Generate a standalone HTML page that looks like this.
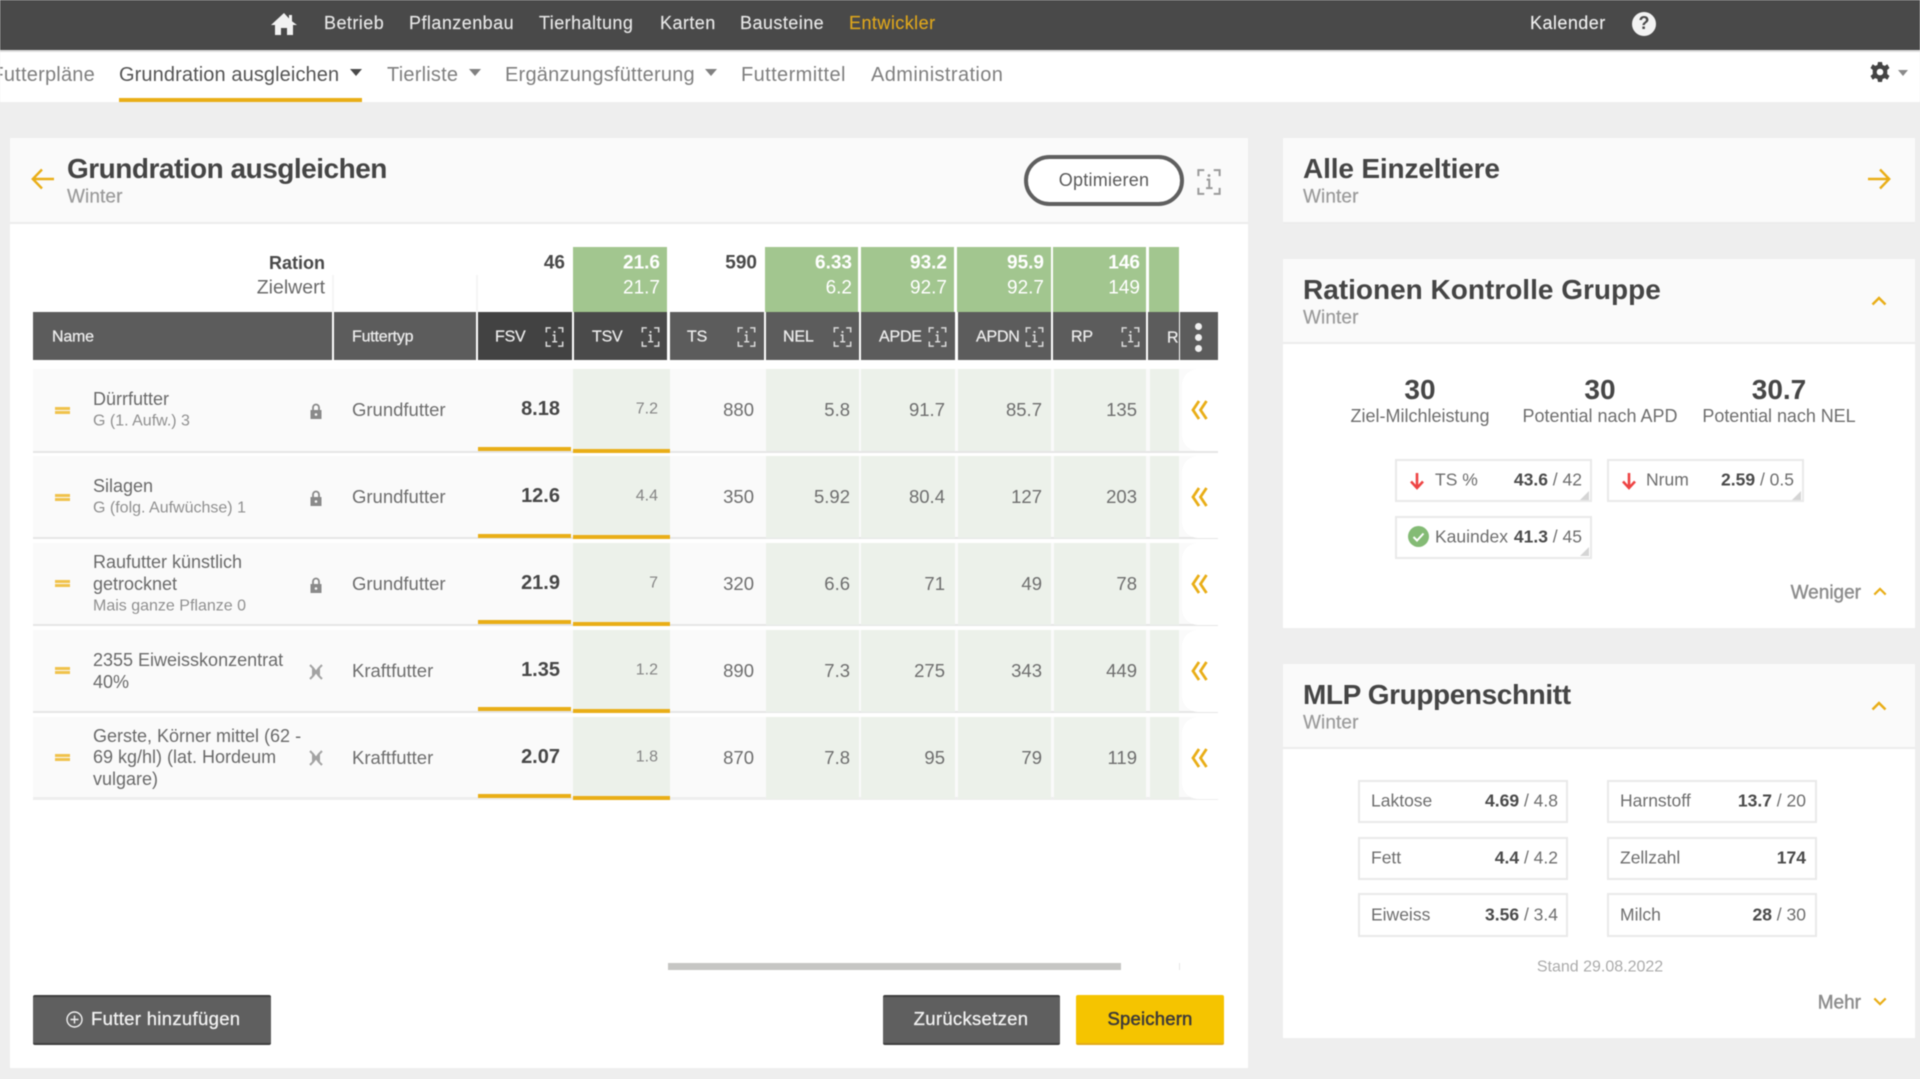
<!DOCTYPE html>
<html lang="de">
<head>
<meta charset="utf-8">
<title>Grundration ausgleichen</title>
<style>
html,body{margin:0;padding:0;width:1920px;height:1079px;overflow:hidden;background:#eeeeee}
#p{position:relative;width:1920px;height:1079px;overflow:hidden;background:#eeeeee;font-family:"Liberation Sans",sans-serif;font-size:18px;color:#6f6f6f;filter:blur(.6px)}
.b{position:absolute}
.t{position:absolute;white-space:nowrap;transform:translateY(-50%);line-height:1.2}
.r{transform:translate(-100%,-50%)}
.c{transform:translate(-50%,-50%)}
.nav{color:#e6e6e6;font-size:18px;letter-spacing:.45px;margin-top:1px;-webkit-text-stroke:.15px #e6e6e6}
.sub{font-size:20px;color:#7f7f7f;letter-spacing:.22px;margin-top:1px}
.h1{font-size:28px;font-weight:bold;color:#454545}
.win{font-size:19px;color:#9a9a9a;margin-top:2px;letter-spacing:.1px;-webkit-text-stroke:.2px #9a9a9a}
.th{color:#ececec;font-size:16px;-webkit-text-stroke:.25px #ececec;margin-top:1px;letter-spacing:-.2px}
.gr{color:#fff;font-size:19px;font-weight:bold;margin-top:1px}
.gl{color:#fff;font-size:19px;margin-top:1px}
.nm{font-size:18px;color:#6a6a6a;margin-top:1px}
.sm{font-size:16px;color:#909090;margin-top:1px}
.fs{font-size:20px;font-weight:bold;color:#474747;margin-top:1px}
.ts{font-size:16px;color:#858585;margin-top:1px}
.v{font-size:18.5px;color:#6e6e6e}
.card{position:absolute;box-sizing:border-box;border:2px solid #e9e9e9;background:#fff}
.lb{font-size:17.5px;color:#6e6e6e}
.val{font-size:17.5px;color:#6e6e6e}
.val b{color:#4a4a4a}
.num{font-size:28px;font-weight:bold;color:#464646}
.cap{font-size:18px;color:#6e6e6e}
.row{position:absolute;left:33px;width:1185px;height:82px;background:#fafafa}
.sep{position:absolute;left:33px;width:1185px;height:2px;background:#e6e6e6}
.gc{position:absolute;height:82px;background:#ecf1ea}
.ol{position:absolute;height:4px;background:#e9ae17}
.arr{position:absolute;left:1182px;width:36px;height:82px;background:#fff;border-radius:16px 0 0 16px}
.hd{position:absolute;top:312px;height:48px;background:#5c5c5c}
.gt{position:absolute;top:247px;height:65px;background:#a2c68f}
.dh{position:absolute;left:55px;width:15px;height:2.6px;background:#f0c24b}
svg{position:absolute;overflow:visible}
</style>
</head>
<body>
<div id="p">
<svg width="0" height="0" style="position:absolute">
<symbol id="ii" viewBox="0 0 20 22"><g fill="none" stroke="currentColor" stroke-width="1.7"><path d="M1 6V1h5M14 1h5v5M1 16v5h5M14 21h5v-5"/><path d="M8 9h2.2v7M7.5 16.2h5.5"/></g><circle cx="10" cy="5.5" r="1.2" fill="currentColor"/></symbol>
<symbol id="lock" viewBox="0 0 12 16"><path d="M3 7V4.500a3 3 0 0 1 6 0V7" fill="none" stroke="currentColor" stroke-width="1.8"/><path d="M.5 7h11v9H.5z" fill="currentColor"/><circle cx="6" cy="11.5" r="1.3" fill="#fafafa"/></symbol>
<symbol id="x" viewBox="0 0 14 16"><g fill="none" stroke="currentColor" stroke-width="2"><path d="M1 1l3 3v8l-3 3M13 1l-3 3v8l3 3"/><path d="M4 4l6 8M10 4l-6 8M4 8h6"/></g></symbol>
<symbol id="dc" viewBox="0 0 17 20"><g fill="none" stroke="currentColor" stroke-width="2.8"><path d="M8 1L2 10l6 9M15.500 1l-6 9 6 9"/></g></symbol>
<symbol id="up" viewBox="0 0 16 10"><path d="M1.500 8.500L8 2l6.500 6.500" fill="none" stroke="currentColor" stroke-width="2.500"/></symbol>
<symbol id="da" viewBox="0 0 16 18"><path d="M8 1v15M2 9.500L8 16l6-6.500" fill="none" stroke="currentColor" stroke-width="2.600"/></symbol>
</svg>

<!-- top header -->
<div class="b" style="left:0;top:0;width:1920px;height:50px;background:#494949"></div>
<div class="b" style="left:0;top:50px;width:1920px;height:2px;background:#dcdcdc"></div>
<svg style="left:271px;top:13px" width="26" height="22" viewBox="0 0 26 22"><path d="M13 0L0 12h4v10h6v-7h6v7h6V12h4L21 8.300V2h-3v3.500z" fill="#f2f2f2"/></svg>
<div class="t nav" style="left:324px;top:23px">Betrieb</div>
<div class="t nav" style="left:409px;top:23px">Pflanzenbau</div>
<div class="t nav" style="left:539px;top:23px">Tierhaltung</div>
<div class="t nav" style="left:660px;top:23px">Karten</div>
<div class="t nav" style="left:740px;top:23px">Bausteine</div>
<div class="t nav" style="left:849px;top:23px;color:#dca51d;-webkit-text-stroke:.15px #dca51d">Entwickler</div>
<div class="t nav" style="left:1530px;top:23px;color:#f0f0f0">Kalender</div>
<div class="b" style="left:1632px;top:12px;width:24px;height:24px;border-radius:50%;background:#f2f2f2"></div>
<div class="t c" style="left:1644px;top:24px;font-size:18px;font-weight:bold;color:#494949">?</div>

<!-- sub nav -->
<div class="b" style="left:0;top:52px;width:1920px;height:50px;background:#fff"></div>
<div class="t sub r" style="left:95px;top:74px">Futterpläne</div>
<div class="t sub" style="left:119px;top:74px;color:#555;letter-spacing:.1px">Grundration ausgleichen</div>
<svg style="left:350px;top:69px" width="12" height="7"><path d="M0 0h12L6 7z" fill="#4a4a4a"/></svg>
<div class="b" style="left:119px;top:98px;width:243px;height:4px;background:#e9ae17"></div>
<div class="t sub" style="left:387px;top:74px">Tierliste</div>
<svg style="left:469px;top:69px" width="12" height="7"><path d="M0 0h12L6 7z" fill="#808080"/></svg>
<div class="t sub" style="left:505px;top:74px">Ergänzungsfütterung</div>
<svg style="left:705px;top:69px" width="12" height="7"><path d="M0 0h12L6 7z" fill="#808080"/></svg>
<div class="t sub" style="left:741px;top:74px;letter-spacing:.4px">Futtermittel</div>
<div class="t sub" style="left:871px;top:74px;letter-spacing:.4px">Administration</div>
<svg style="left:1870px;top:62px" width="20" height="20" viewBox="0 0 20 20"><path d="M8 0h4l.6 3 2.200.9L17.300 2.200 19.500 6l-2.300 2 .1 2-.1 2 2.300 2-2.200 3.800-2.500-1.700-2.200.9L12 20H8l-.6-3-2.200-.9-2.500 1.700L.5 14l2.300-2-.1-2 .1-2L.5 6l2.200-3.800 2.500 1.700L7.400 3z" fill="#444"/><circle cx="10" cy="10" r="3.300" fill="#fff"/></svg>
<svg style="left:1898px;top:70px" width="10" height="6"><path d="M0 0h10L5 6z" fill="#8a8a8a"/></svg>

<!-- left panel -->
<div class="b" style="left:10px;top:138px;width:1238px;height:930px;background:#fff"></div>
<div class="b" style="left:10px;top:138px;width:1238px;height:84px;background:#fafafa"></div>
<div class="b" style="left:10px;top:222px;width:1238px;height:2px;background:#ececec"></div>
<svg style="left:31px;top:168px" width="24" height="22" viewBox="0 0 24 22"><path d="M23 11H2M11 1.500L1.800 11l9.200 9.500" fill="none" stroke="#e9ae17" stroke-width="2.400"/></svg>
<div class="t h1" style="left:67px;top:169px;letter-spacing:-.5px">Grundration ausgleichen</div>
<div class="t win" style="left:67px;top:196px">Winter</div>
<div class="b" style="left:1024px;top:155px;width:160px;height:51px;box-sizing:border-box;border:4px solid #5f5f5f;border-radius:26px;background:#fff"></div>
<div class="t c" style="left:1104px;top:181px;font-size:18px;color:#5a5a5a;letter-spacing:.25px">Optimieren</div>
<svg style="left:1196px;top:169px;color:#9a9a9a" width="26" height="26"><use href="#ii"/></svg>

<!-- table top -->
<div class="b" style="left:332px;top:275px;width:2px;height:37px;background:#f5f5f5"></div>
<div class="b" style="left:476px;top:275px;width:2px;height:37px;background:#f5f5f5"></div>
<div class="t r" style="left:325px;top:264px;font-weight:bold;font-size:18px;color:#4a4a4a">Ration</div>
<div class="t r" style="left:325px;top:288px;font-size:19.5px;color:#6a6a6a">Zielwert</div>
<div class="t r" style="left:565px;top:264px;font-weight:bold;font-size:19px;color:#4a4a4a">46</div>
<div class="t r" style="left:757px;top:264px;font-weight:bold;font-size:19px;color:#4a4a4a">590</div>
<div class="gt" style="left:573px;width:94px"></div>
<div class="gt" style="left:765px;width:93px"></div>
<div class="gt" style="left:861px;width:93px"></div>
<div class="gt" style="left:957px;width:94px"></div>
<div class="gt" style="left:1053px;width:93px"></div>
<div class="gt" style="left:1149px;width:30px"></div>
<div class="t gr r" style="left:660px;top:263px">21.6</div><div class="t gl r" style="left:660px;top:288px">21.7</div>
<div class="t gr r" style="left:852px;top:263px">6.33</div><div class="t gl r" style="left:852px;top:288px">6.2</div>
<div class="t gr r" style="left:947px;top:263px">93.2</div><div class="t gl r" style="left:947px;top:288px">92.7</div>
<div class="t gr r" style="left:1044px;top:263px">95.9</div><div class="t gl r" style="left:1044px;top:288px">92.7</div>
<div class="t gr r" style="left:1140px;top:263px">146</div><div class="t gl r" style="left:1140px;top:288px">149</div>

<!-- table header -->
<div class="hd" style="left:33px;width:299px"></div>
<div class="hd" style="left:334px;width:142px"></div>
<div class="hd" style="left:478px;width:94px;background:#424242"></div>
<div class="hd" style="left:574px;width:93px;background:#4a4a4a"></div>
<div class="hd" style="left:670px;width:94px"></div>
<div class="hd" style="left:766px;width:93px"></div>
<div class="hd" style="left:861px;width:94px"></div>
<div class="hd" style="left:958px;width:93px"></div>
<div class="hd" style="left:1053px;width:93px"></div>
<div class="hd" style="left:1148px;width:31px;overflow:hidden"><div class="t th" style="left:19px;top:25px">RP</div></div>
<div class="hd" style="left:1180px;width:38px"></div>
<div class="t th" style="left:52px;top:336px">Name</div>
<div class="t th" style="left:352px;top:336px">Futtertyp</div>
<div class="t th" style="left:495px;top:336px">FSV</div>
<div class="t th" style="left:592px;top:336px">TSV</div>
<div class="t th" style="left:687px;top:336px">TS</div>
<div class="t th" style="left:783px;top:336px">NEL</div>
<div class="t th" style="left:879px;top:336px">APDE</div>
<div class="t th" style="left:976px;top:336px">APDN</div>
<div class="t th" style="left:1081px;top:336px;margin-left:-10px">RP</div>
<svg style="left:545px;top:327px;color:#d8d8d8" width="19" height="20"><use href="#ii"/></svg>
<svg style="left:641px;top:327px;color:#d8d8d8" width="19" height="20"><use href="#ii"/></svg>
<svg style="left:737px;top:327px;color:#d8d8d8" width="19" height="20"><use href="#ii"/></svg>
<svg style="left:833px;top:327px;color:#d8d8d8" width="19" height="20"><use href="#ii"/></svg>
<svg style="left:928px;top:327px;color:#d8d8d8" width="19" height="20"><use href="#ii"/></svg>
<svg style="left:1025px;top:327px;color:#d8d8d8" width="19" height="20"><use href="#ii"/></svg>
<svg style="left:1121px;top:327px;color:#d8d8d8" width="19" height="20"><use href="#ii"/></svg>
<div class="b" style="left:1195px;top:323px;width:7px;height:7px;border-radius:50%;background:#f0f0f0"></div>
<div class="b" style="left:1195px;top:334px;width:7px;height:7px;border-radius:50%;background:#f0f0f0"></div>
<div class="b" style="left:1195px;top:345px;width:7px;height:7px;border-radius:50%;background:#f0f0f0"></div>

<!-- row backgrounds -->
<div class="row" style="top:369px"></div><div class="row" style="top:456px"></div><div class="row" style="top:543px"></div><div class="row" style="top:630px"></div><div class="row" style="top:717px"></div>
<div class="sep" style="top:451px"></div><div class="sep" style="top:537px"></div><div class="sep" style="top:624px"></div><div class="sep" style="top:711px"></div><div class="sep" style="top:797px;height:3px;background:#eeeeee"></div>

<div class="gc" style="top:369px;left:573px;width:97px"></div><div class="gc" style="top:369px;left:766px;width:93px"></div><div class="gc" style="top:369px;left:861px;width:94px"></div><div class="gc" style="top:369px;left:958px;width:93px"></div><div class="gc" style="top:369px;left:1054px;width:92px"></div><div class="gc" style="top:369px;left:1150px;width:29px"></div>
<div class="gc" style="top:456px;left:573px;width:97px"></div><div class="gc" style="top:456px;left:766px;width:93px"></div><div class="gc" style="top:456px;left:861px;width:94px"></div><div class="gc" style="top:456px;left:958px;width:93px"></div><div class="gc" style="top:456px;left:1054px;width:92px"></div><div class="gc" style="top:456px;left:1150px;width:29px"></div>
<div class="gc" style="top:543px;left:573px;width:97px"></div><div class="gc" style="top:543px;left:766px;width:93px"></div><div class="gc" style="top:543px;left:861px;width:94px"></div><div class="gc" style="top:543px;left:958px;width:93px"></div><div class="gc" style="top:543px;left:1054px;width:92px"></div><div class="gc" style="top:543px;left:1150px;width:29px"></div>
<div class="gc" style="top:630px;left:573px;width:97px"></div><div class="gc" style="top:630px;left:766px;width:93px"></div><div class="gc" style="top:630px;left:861px;width:94px"></div><div class="gc" style="top:630px;left:958px;width:93px"></div><div class="gc" style="top:630px;left:1054px;width:92px"></div><div class="gc" style="top:630px;left:1150px;width:29px"></div>
<div class="gc" style="top:717px;left:573px;width:97px"></div><div class="gc" style="top:717px;left:766px;width:93px"></div><div class="gc" style="top:717px;left:861px;width:94px"></div><div class="gc" style="top:717px;left:958px;width:93px"></div><div class="gc" style="top:717px;left:1054px;width:92px"></div><div class="gc" style="top:717px;left:1150px;width:29px"></div>

<div class="arr" style="top:369px"></div><div class="arr" style="top:456px"></div><div class="arr" style="top:543px"></div><div class="arr" style="top:630px"></div><div class="arr" style="top:717px"></div>

<div class="ol" style="left:478px;width:93px;top:447px"></div><div class="ol" style="left:573px;width:97px;top:449px"></div>
<div class="ol" style="left:478px;width:93px;top:534px"></div><div class="ol" style="left:573px;width:97px;top:535px"></div>
<div class="ol" style="left:478px;width:93px;top:620px"></div><div class="ol" style="left:573px;width:97px;top:622px"></div>
<div class="ol" style="left:478px;width:93px;top:707px"></div><div class="ol" style="left:573px;width:97px;top:709px"></div>
<div class="ol" style="left:478px;width:93px;top:794px"></div><div class="ol" style="left:573px;width:97px;top:796px"></div>

<!-- drag handles -->
<div class="dh" style="top:407px"></div><div class="dh" style="top:411px"></div>
<div class="dh" style="top:494px"></div><div class="dh" style="top:498px"></div>
<div class="dh" style="top:580px"></div><div class="dh" style="top:584px"></div>
<div class="dh" style="top:667px"></div><div class="dh" style="top:671px"></div>
<div class="dh" style="top:754px"></div><div class="dh" style="top:758px"></div>

<!-- row 1 -->
<div class="t nm" style="left:93px;top:399px">Dürrfutter</div>
<div class="t sm" style="left:93px;top:420px">G (1. Aufw.) 3</div>
<svg style="left:310px;top:403px;color:#8a8a8a" width="12" height="16"><use href="#lock"/></svg>
<div class="t v" style="left:352px;top:410px">Grundfutter</div>
<div class="t fs r" style="left:560px;top:408px">8.18</div>
<div class="t ts r" style="left:658px;top:408px">7.2</div>
<div class="t v r" style="left:754px;top:410px">880</div>
<div class="t v r" style="left:850px;top:410px">5.8</div>
<div class="t v r" style="left:945px;top:410px">91.7</div>
<div class="t v r" style="left:1042px;top:410px">85.7</div>
<div class="t v r" style="left:1137px;top:410px">135</div>
<svg style="left:1191px;top:400px;color:#e9ae17" width="17" height="20"><use href="#dc"/></svg>

<!-- row 2 -->
<div class="t nm" style="left:93px;top:486px">Silagen</div>
<div class="t sm" style="left:93px;top:507px">G (folg. Aufwüchse) 1</div>
<svg style="left:310px;top:490px;color:#8a8a8a" width="12" height="16"><use href="#lock"/></svg>
<div class="t v" style="left:352px;top:497px">Grundfutter</div>
<div class="t fs r" style="left:560px;top:495px">12.6</div>
<div class="t ts r" style="left:658px;top:495px">4.4</div>
<div class="t v r" style="left:754px;top:497px">350</div>
<div class="t v r" style="left:850px;top:497px">5.92</div>
<div class="t v r" style="left:945px;top:497px">80.4</div>
<div class="t v r" style="left:1042px;top:497px">127</div>
<div class="t v r" style="left:1137px;top:497px">203</div>
<svg style="left:1191px;top:487px;color:#e9ae17" width="17" height="20"><use href="#dc"/></svg>

<!-- row 3 -->
<div class="t nm" style="left:93px;top:562px">Raufutter künstlich</div>
<div class="t nm" style="left:93px;top:584px">getrocknet</div>
<div class="t sm" style="left:93px;top:605px">Mais ganze Pflanze 0</div>
<svg style="left:310px;top:577px;color:#8a8a8a" width="12" height="16"><use href="#lock"/></svg>
<div class="t v" style="left:352px;top:584px">Grundfutter</div>
<div class="t fs r" style="left:560px;top:582px">21.9</div>
<div class="t ts r" style="left:658px;top:582px">7</div>
<div class="t v r" style="left:754px;top:584px">320</div>
<div class="t v r" style="left:850px;top:584px">6.6</div>
<div class="t v r" style="left:945px;top:584px">71</div>
<div class="t v r" style="left:1042px;top:584px">49</div>
<div class="t v r" style="left:1137px;top:584px">78</div>
<svg style="left:1191px;top:574px;color:#e9ae17" width="17" height="20"><use href="#dc"/></svg>

<!-- row 4 -->
<div class="t nm" style="left:93px;top:660px">2355 Eiweisskonzentrat</div>
<div class="t nm" style="left:93px;top:682px">40%</div>
<svg style="left:309px;top:664px;color:#a3a3a3" width="14" height="16"><use href="#x"/></svg>
<div class="t v" style="left:352px;top:671px">Kraftfutter</div>
<div class="t fs r" style="left:560px;top:669px">1.35</div>
<div class="t ts r" style="left:658px;top:669px">1.2</div>
<div class="t v r" style="left:754px;top:671px">890</div>
<div class="t v r" style="left:850px;top:671px">7.3</div>
<div class="t v r" style="left:945px;top:671px">275</div>
<div class="t v r" style="left:1042px;top:671px">343</div>
<div class="t v r" style="left:1137px;top:671px">449</div>
<svg style="left:1191px;top:661px;color:#e9ae17" width="17" height="20"><use href="#dc"/></svg>

<!-- row 5 -->
<div class="t nm" style="left:93px;top:736px">Gerste, Körner mittel (62 -</div>
<div class="t nm" style="left:93px;top:757px">69 kg/hl) (lat. Hordeum</div>
<div class="t nm" style="left:93px;top:779px">vulgare)</div>
<svg style="left:309px;top:750px;color:#a3a3a3" width="14" height="16"><use href="#x"/></svg>
<div class="t v" style="left:352px;top:758px">Kraftfutter</div>
<div class="t fs r" style="left:560px;top:756px">2.07</div>
<div class="t ts r" style="left:658px;top:756px">1.8</div>
<div class="t v r" style="left:754px;top:758px">870</div>
<div class="t v r" style="left:850px;top:758px">7.8</div>
<div class="t v r" style="left:945px;top:758px">95</div>
<div class="t v r" style="left:1042px;top:758px">79</div>
<div class="t v r" style="left:1137px;top:758px">119</div>
<svg style="left:1191px;top:748px;color:#e9ae17" width="17" height="20"><use href="#dc"/></svg>

<!-- scrollbar -->
<div class="b" style="left:668px;top:963px;width:453px;height:7px;background:#c6c6c4"></div>
<div class="b" style="left:1179px;top:963px;width:1px;height:7px;background:#e6e6e6"></div>

<!-- buttons -->
<div class="b" style="left:33px;top:995px;width:238px;height:50px;box-sizing:border-box;background:#5f5f5f;border-top:2px solid #3f3f3f;border-bottom:2px solid #3f3f3f;border-radius:2px"></div>
<svg style="left:66px;top:1011px" width="17" height="17" viewBox="0 0 17 17"><circle cx="8.500" cy="8.500" r="7.500" fill="none" stroke="#efefef" stroke-width="1.400"/><path d="M8.500 4.500v8M4.500 8.500h8" stroke="#efefef" stroke-width="1.400"/></svg>
<div class="t" style="left:91px;top:1019px;font-size:18.5px;color:#f2f2f2;-webkit-text-stroke:.3px #f2f2f2;letter-spacing:.32px">Futter hinzufügen</div>
<div class="b" style="left:883px;top:995px;width:177px;height:50px;box-sizing:border-box;background:#5f5f5f;border-top:2px solid #3f3f3f;border-bottom:2px solid #3f3f3f;border-radius:2px"></div>
<div class="t c" style="left:971px;top:1019px;font-size:18.5px;color:#f2f2f2;-webkit-text-stroke:.3px #f2f2f2;letter-spacing:.3px">Zurücksetzen</div>
<div class="b" style="left:1076px;top:995px;width:148px;height:50px;box-sizing:border-box;background:#f5c400;border-bottom:2px solid #e2ab1a;border-radius:2px"></div>
<div class="t c" style="left:1150px;top:1019px;font-size:18.5px;color:#3f3b38;-webkit-text-stroke:.55px #3f3b38;letter-spacing:.2px">Speichern</div>

<!-- right panel 1 -->
<div class="b" style="left:1283px;top:138px;width:632px;height:84px;background:#fafafa;border-bottom:2px solid #ececec;box-sizing:content-box"></div>
<div class="t h1" style="left:1303px;top:169px;letter-spacing:-.15px">Alle Einzeltiere</div>
<div class="t win" style="left:1303px;top:196px">Winter</div>
<svg style="left:1867px;top:168px" width="24" height="22" viewBox="0 0 24 22"><path d="M1 11h21M13 1.500L22.200 11 13 20.500" fill="none" stroke="#e9ae17" stroke-width="2.400"/></svg>

<!-- right panel 2 -->
<div class="b" style="left:1283px;top:259px;width:632px;height:369px;background:#fff"></div>
<div class="b" style="left:1283px;top:259px;width:632px;height:83px;background:#fafafa;border-bottom:2px solid #ececec"></div>
<div class="t h1" style="left:1303px;top:290px">Rationen Kontrolle Gruppe</div>
<div class="t win" style="left:1303px;top:317px">Winter</div>
<svg style="left:1871px;top:296px;color:#e9ae17" width="16" height="10"><use href="#up"/></svg>
<div class="t num c" style="left:1420px;top:390px">30</div>
<div class="t num c" style="left:1600px;top:390px">30</div>
<div class="t num c" style="left:1779px;top:390px">30.7</div>
<div class="t cap c" style="left:1420px;top:417px">Ziel-Milchleistung</div>
<div class="t cap c" style="left:1600px;top:417px">Potential nach APD</div>
<div class="t cap c" style="left:1779px;top:417px;letter-spacing:-.05px">Potential nach NEL</div>

<div class="card" style="left:1395px;top:459px;width:197px;height:43px"></div>
<div class="card" style="left:1607px;top:459px;width:197px;height:43px"></div>
<div class="card" style="left:1395px;top:516px;width:197px;height:43px"></div>
<svg style="left:1409px;top:472px;color:#ee4444" width="16" height="18"><use href="#da"/></svg>
<svg style="left:1621px;top:472px;color:#ee4444" width="16" height="18"><use href="#da"/></svg>
<div class="t lb" style="left:1435px;top:480px">TS %</div>
<div class="t val r" style="left:1582px;top:480px"><b>43.6</b> / 42</div>
<div class="t lb" style="left:1646px;top:480px">Nrum</div>
<div class="t val r" style="left:1794px;top:480px"><b>2.59</b> / 0.5</div>
<svg style="left:1408px;top:526px" width="21" height="21" viewBox="0 0 21 21"><circle cx="10.500" cy="10.500" r="10.500" fill="#84bb75"/><path d="M5.500 11l3.500 3.500 6.500-7" fill="none" stroke="#fff" stroke-width="2"/></svg>
<div class="t lb" style="left:1435px;top:537px">Kauindex</div>
<div class="t val r" style="left:1582px;top:537px"><b>41.3</b> / 45</div>
<svg style="left:1580px;top:491px" width="9" height="9"><path d="M9 0v9H0z" fill="#d5d5d5"/></svg>
<svg style="left:1792px;top:491px" width="9" height="9"><path d="M9 0v9H0z" fill="#d5d5d5"/></svg>
<svg style="left:1580px;top:547px" width="9" height="9"><path d="M9 0v9H0z" fill="#d5d5d5"/></svg>
<div class="t r" style="left:1861px;top:594px;font-size:19px;color:#8c8c8c;-webkit-text-stroke:.4px #8c8c8c">Weniger</div>
<svg style="left:1873px;top:587px;color:#e9ae17" width="14" height="9"><use href="#up"/></svg>

<!-- right panel 3 -->
<div class="b" style="left:1283px;top:664px;width:632px;height:374px;background:#fff"></div>
<div class="b" style="left:1283px;top:664px;width:632px;height:83px;background:#fafafa;border-bottom:2px solid #ececec"></div>
<div class="t h1" style="left:1303px;top:695px;letter-spacing:-.4px">MLP Gruppenschnitt</div>
<div class="t win" style="left:1303px;top:722px">Winter</div>
<svg style="left:1871px;top:701px;color:#e9ae17" width="16" height="10"><use href="#up"/></svg>

<div class="card" style="left:1358px;top:780px;width:210px;height:43px"></div>
<div class="card" style="left:1607px;top:780px;width:210px;height:43px"></div>
<div class="card" style="left:1358px;top:837px;width:210px;height:43px"></div>
<div class="card" style="left:1607px;top:837px;width:210px;height:43px"></div>
<div class="card" style="left:1358px;top:893px;width:210px;height:44px"></div>
<div class="card" style="left:1607px;top:893px;width:210px;height:44px"></div>
<div class="t lb" style="left:1371px;top:801px">Laktose</div>
<div class="t val r" style="left:1558px;top:801px"><b>4.69</b> / 4.8</div>
<div class="t lb" style="left:1620px;top:801px">Harnstoff</div>
<div class="t val r" style="left:1806px;top:801px"><b>13.7</b> / 20</div>
<div class="t lb" style="left:1371px;top:858px">Fett</div>
<div class="t val r" style="left:1558px;top:858px"><b>4.4</b> / 4.2</div>
<div class="t lb" style="left:1620px;top:858px">Zellzahl</div>
<div class="t val r" style="left:1806px;top:858px"><b>174</b></div>
<div class="t lb" style="left:1371px;top:915px">Eiweiss</div>
<div class="t val r" style="left:1558px;top:915px"><b>3.56</b> / 3.4</div>
<div class="t lb" style="left:1620px;top:915px">Milch</div>
<div class="t val r" style="left:1806px;top:915px"><b>28</b> / 30</div>
<div class="t c" style="left:1600px;top:967px;font-size:16px;color:#ababab">Stand 29.08.2022</div>
<div class="t r" style="left:1861px;top:1004px;font-size:19px;color:#8c8c8c;-webkit-text-stroke:.4px #8c8c8c">Mehr</div>
<svg style="left:1873px;top:997px;color:#e9ae17;transform:scaleY(-1)" width="14" height="9"><use href="#up"/></svg>
</div>
</body>
</html>
